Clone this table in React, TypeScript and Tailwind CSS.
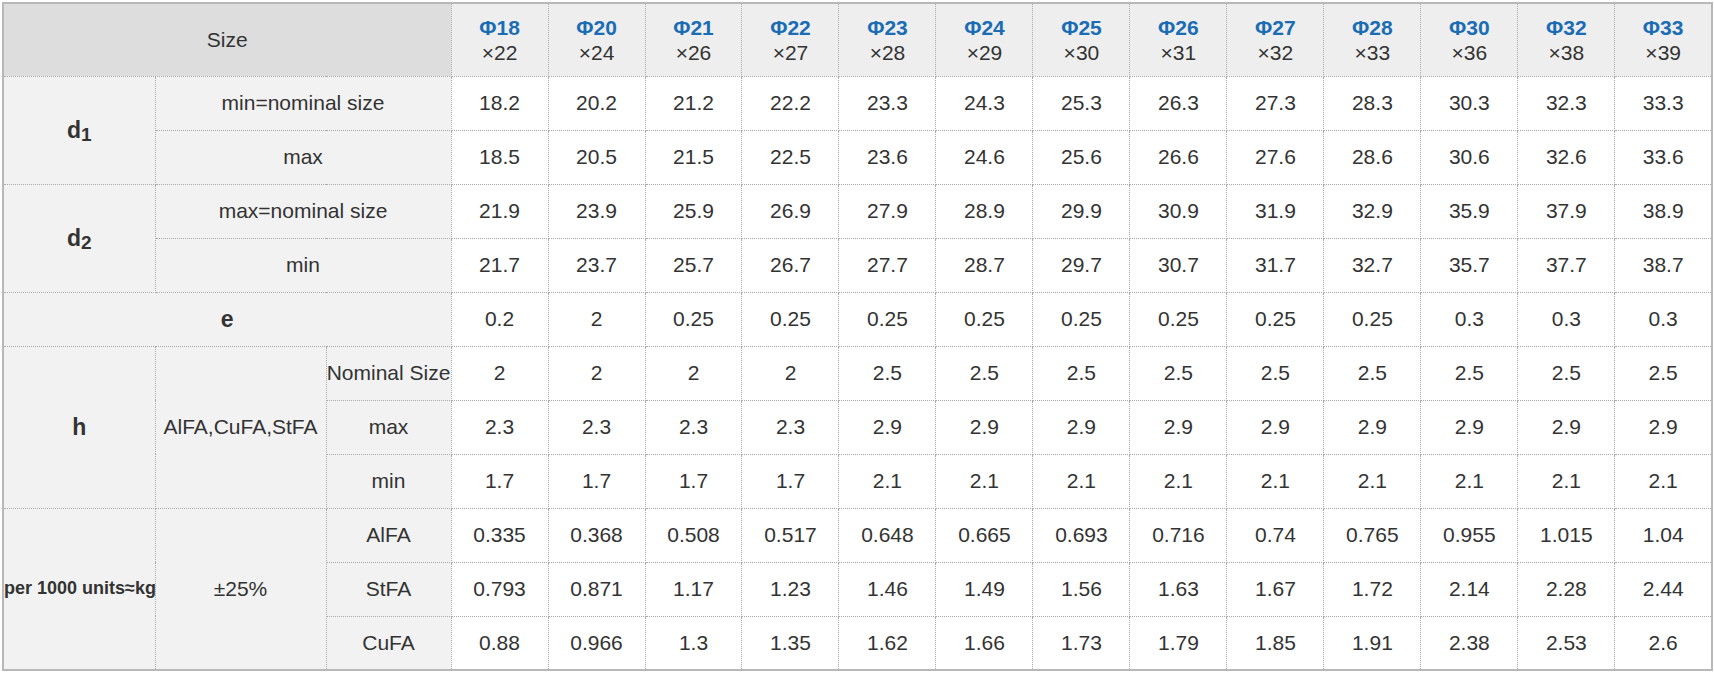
import React from 'react';

const sizes = [
  ['18', '22'], ['20', '24'], ['21', '26'], ['22', '27'], ['23', '28'], ['24', '29'], ['25', '30'],
  ['26', '31'], ['27', '32'], ['28', '33'], ['30', '36'], ['32', '38'], ['33', '39'],
];

const d1Min = ['18.2', '20.2', '21.2', '22.2', '23.3', '24.3', '25.3', '26.3', '27.3', '28.3', '30.3', '32.3', '33.3'];
const d1Max = ['18.5', '20.5', '21.5', '22.5', '23.6', '24.6', '25.6', '26.6', '27.6', '28.6', '30.6', '32.6', '33.6'];
const d2Max = ['21.9', '23.9', '25.9', '26.9', '27.9', '28.9', '29.9', '30.9', '31.9', '32.9', '35.9', '37.9', '38.9'];
const d2Min = ['21.7', '23.7', '25.7', '26.7', '27.7', '28.7', '29.7', '30.7', '31.7', '32.7', '35.7', '37.7', '38.7'];
const eVals = ['0.2', '2', '0.25', '0.25', '0.25', '0.25', '0.25', '0.25', '0.25', '0.25', '0.3', '0.3', '0.3'];
const hNom = ['2', '2', '2', '2', '2.5', '2.5', '2.5', '2.5', '2.5', '2.5', '2.5', '2.5', '2.5'];
const hMax = ['2.3', '2.3', '2.3', '2.3', '2.9', '2.9', '2.9', '2.9', '2.9', '2.9', '2.9', '2.9', '2.9'];
const hMin = ['1.7', '1.7', '1.7', '1.7', '2.1', '2.1', '2.1', '2.1', '2.1', '2.1', '2.1', '2.1', '2.1'];
const alfa = ['0.335', '0.368', '0.508', '0.517', '0.648', '0.665', '0.693', '0.716', '0.74', '0.765', '0.955', '1.015', '1.04'];
const stfa = ['0.793', '0.871', '1.17', '1.23', '1.46', '1.49', '1.56', '1.63', '1.67', '1.72', '2.14', '2.28', '2.44'];
const cufa = ['0.88', '0.966', '1.3', '1.35', '1.62', '1.66', '1.73', '1.79', '1.85', '1.91', '2.38', '2.53', '2.6'];

const cell = 'border border-dotted border-[#aaa] text-center align-middle p-0';
const label = `${cell} bg-[#f2f2f2]`;

function Values({ vals }: { vals: string[] }) {
  return (
    <>
      {vals.map((v, i) => (
        <td key={i} className={`${cell} bg-white`}>{v}</td>
      ))}
    </>
  );
}

function Sym({ s, sub }: { s: string; sub?: string }) {
  return (
    <span className="font-bold text-[23px]">
      {s}
      {sub && <sub className="text-[19px] relative top-[3px]">{sub}</sub>}
    </span>
  );
}

export default function App() {
  return (
    <div className="p-[2px] bg-white" style={{ fontFamily: '"Liberation Sans", Arial, sans-serif' }}>
      <table className="table-fixed border-collapse border-2 border-solid border-[#b8b8b8] w-[1711px] text-[21px] text-[#333]">
        <colgroup>
          <col className="w-[152px]" />
          <col className="w-[171px]" />
          <col className="w-[125px]" />
          {sizes.map((_, i) => (
            <col key={i} />
          ))}
        </colgroup>
        <tbody>
          {/* header */}
          <tr className="h-[73px] leading-[25px]">
            <td colSpan={3} className={`${cell} bg-[#dddddd]`}>Size</td>
            {sizes.map(([a, b]) => (
              <td key={a} className={`${cell} bg-[#eeeeee]`}>
                <div className="font-bold text-[#1a6db4]">Φ{a}</div>
                <div>×{b}</div>
              </td>
            ))}
          </tr>

          {/* d1 */}
          <tr className="h-[54px]">
            <td rowSpan={2} className={label}><Sym s="d" sub="1" /></td>
            <td colSpan={2} className={label}>min=nominal size</td>
            <Values vals={d1Min} />
          </tr>
          <tr className="h-[54px]">
            <td colSpan={2} className={label}>max</td>
            <Values vals={d1Max} />
          </tr>

          {/* d2 */}
          <tr className="h-[54px]">
            <td rowSpan={2} className={label}><Sym s="d" sub="2" /></td>
            <td colSpan={2} className={label}>max=nominal size</td>
            <Values vals={d2Max} />
          </tr>
          <tr className="h-[54px]">
            <td colSpan={2} className={label}>min</td>
            <Values vals={d2Min} />
          </tr>

          {/* e */}
          <tr className="h-[54px]">
            <td colSpan={3} className={label}><Sym s="e" /></td>
            <Values vals={eVals} />
          </tr>

          {/* h */}
          <tr className="h-[54px]">
            <td rowSpan={3} className={label}><Sym s="h" /></td>
            <td rowSpan={3} className={label}>AlFA,CuFA,StFA</td>
            <td className={`${label} whitespace-nowrap`}>Nominal Size</td>
            <Values vals={hNom} />
          </tr>
          <tr className="h-[54px]">
            <td className={label}>max</td>
            <Values vals={hMax} />
          </tr>
          <tr className="h-[54px]">
            <td className={label}>min</td>
            <Values vals={hMin} />
          </tr>

          {/* weight */}
          <tr className="h-[54px]">
            <td rowSpan={3} className={`${label} whitespace-nowrap font-bold text-[18px]`}>per 1000 units≈kg</td>
            <td rowSpan={3} className={label}>±25%</td>
            <td className={label}>AlFA</td>
            <Values vals={alfa} />
          </tr>
          <tr className="h-[54px]">
            <td className={label}>StFA</td>
            <Values vals={stfa} />
          </tr>
          <tr className="h-[54px]">
            <td className={label}>CuFA</td>
            <Values vals={cufa} />
          </tr>
        </tbody>
      </table>
    </div>
  );
}
